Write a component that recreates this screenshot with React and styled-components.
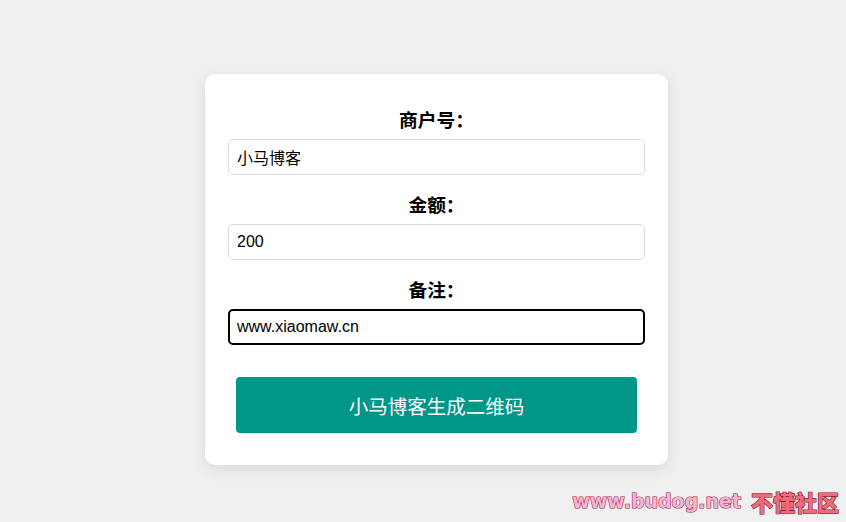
import React from 'react';
import styled, { createGlobalStyle } from 'styled-components';

const GlobalStyle = createGlobalStyle`
  html, body {
    margin: 0;
    padding: 0;
    background: #f0f0f0;
    height: 100%;
  }
  body {
    font-family: "Liberation Sans", "Noto Sans CJK SC", sans-serif;
  }
`;

const fields = [
  { label: '商户号：', value: '小马博客' },
  { label: '金额：', value: '200' },
  { label: '备注：', value: 'www.xiaomaw.cn', focused: true },
];

export default function App() {
  return (
    <Page>
      <GlobalStyle />
      <Card>
        {fields.map((f) => (
          <FormGroup key={f.label}>
            <Label>{f.label}</Label>
            <Input defaultValue={f.value} $focused={f.focused} readOnly />
          </FormGroup>
        ))}
        <Button type="button">小马博客生成二维码</Button>
      </Card>
      <Watermark>
        <WatermarkUrl>www.budog.net</WatermarkUrl>
        <WatermarkName>不懂社区</WatermarkName>
      </Watermark>
    </Page>
  );
}

const Page = styled.div`
  position: relative;
  min-height: 522px;
  box-sizing: border-box;
  display: flex;
  justify-content: center;
  align-items: flex-start;
  padding: 74px 0 0 27px;
`;

const Card = styled.div`
  width: 463px;
  box-sizing: border-box;
  background: #fff;
  border-radius: 10px;
  box-shadow: 0 4px 14px rgba(0, 0, 0, 0.1);
  padding: 33px 23px 32px;
  display: flex;
  flex-direction: column;
  align-items: center;
`;

const FormGroup = styled.div`
  width: 100%;
  display: flex;
  flex-direction: column;
  margin-bottom: 17px;
  &:last-of-type {
    margin-bottom: 32px;
  }
`;

const Label = styled.label`
  display: block;
  text-align: center;
  font-family: "Noto Sans CJK SC", sans-serif;
  font-weight: 700;
  font-size: 18.72px;
  line-height: 24px;
  color: #000;
  margin-bottom: 8px;
`;

const Input = styled.input`
  width: 100%;
  height: 36px;
  box-sizing: border-box;
  padding: 0 ${(p) => (p.$focused ? '7px' : '8px')};
  border: ${(p) => (p.$focused ? '2px solid #000' : '1px solid #ddd')};
  border-radius: 5px;
  font-family: "Liberation Sans", "Noto Sans CJK SC", sans-serif;
  font-size: 16px;
  color: #000;
  background: #fff;
  outline: none;
`;

const Button = styled.button`
  width: 96%;
  height: 56px;
  border: none;
  border-radius: 4px;
  background: #009688;
  color: #fff;
  font-family: "Noto Sans CJK SC", sans-serif;
  font-size: 19.5px;
  cursor: pointer;
`;

const Watermark = styled.div`
  position: absolute;
  right: 7px;
  bottom: 9px;
  display: flex;
  align-items: center;
  gap: 10px;
  line-height: 24px;
`;

const WatermarkUrl = styled.span`
  font-family: "DejaVu Sans", sans-serif;
  font-size: 19px;
  font-weight: 700;
  color: #f4b3cf;
  -webkit-text-stroke: 1.2px #a8284a;
  paint-order: stroke fill;
`;

const WatermarkName = styled.span`
  font-family: "Noto Sans CJK SC", sans-serif;
  font-size: 22px;
  font-weight: 900;
  color: #f06a78;
  -webkit-text-stroke: 1.2px #8a1a2e;
  paint-order: stroke fill;
`;
